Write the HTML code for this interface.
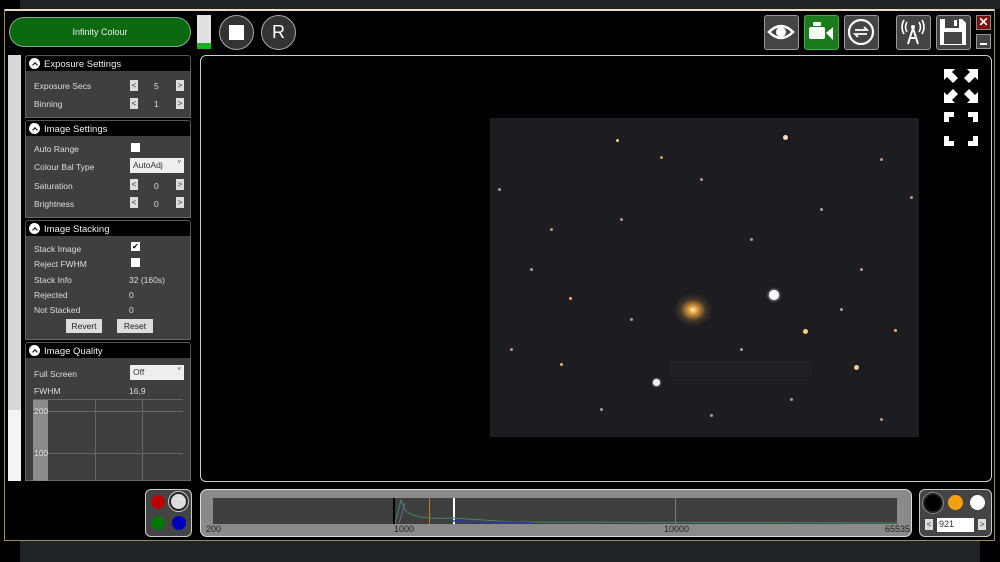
<!DOCTYPE html>
<html><head><style>
*{margin:0;padding:0;box-sizing:border-box}
body{width:1000px;height:562px;background:#000;position:relative;overflow:hidden;font-family:"Liberation Sans",sans-serif;color:#ddd;font-size:9px}
.a{position:absolute}
.hdr{position:absolute;left:25px;width:166px;height:16px;background:#000;border:1px solid #555;border-bottom:none;border-radius:3px 3px 0 0;font-size:9.5px;color:#eee;padding:3px 0 0 18px}
.hdr:before{content:"";position:absolute;left:3px;top:2px;width:11px;height:11px;border-radius:50%;background:#fff}
.hdr:after{content:"";position:absolute;left:7px;top:7px;width:3px;height:3px;border-left:1.5px solid #000;border-top:1.5px solid #000;transform:rotate(45deg)}
.body{position:absolute;left:25px;width:166px;background:#3f3f3f;border:1px solid #666;border-top:none}
.lbl{position:absolute;left:8px;font-size:8.5px;color:#ddd}
.val{position:absolute;font-size:8.5px;color:#ddd}
.btn{position:absolute;width:8px;height:11px;background:#ddd;color:#333;font-size:8px;text-align:center;line-height:11px}
.chk{position:absolute;width:9px;height:9px;background:#fff}
.tb{position:absolute;top:15px;width:35px;height:35px;border:1.5px solid #999;border-radius:3px;background:#444}
.s{position:absolute;width:3px;height:3px;border-radius:50%;background:#b98}
</style></head><body>
<div class="a" style="left:0;top:0;width:1000px;height:9px;background:#1e2428"></div>
<div class="a" style="left:0;top:0;width:20px;height:9px;background:#000"></div>
<div class="a" style="left:4px;top:9px;width:991px;height:2px;background:#e8dcc0"></div>
<div class="a" style="left:4px;top:9px;width:991px;height:532px;border:1px solid #a08a60;border-top:none"></div>
<div class="a" style="left:0;top:541px;width:1000px;height:21px;background:#1e2428"></div>
<div class="a" style="left:0;top:541px;width:20px;height:21px;background:#000"></div>
<div class="a" style="left:980px;top:541px;width:20px;height:21px;background:#000"></div>

<div class="a" style="left:9px;top:17px;width:182px;height:30px;border-radius:15px;background:#0b6a10;border:1px solid #8a9;color:#eee;font-size:9px;text-align:center;line-height:28px">Infinity Colour</div>
<div class="a" style="left:197px;top:15px;width:14px;height:34px;background:#e0e0e0"></div>
<div class="a" style="left:197px;top:43px;width:14px;height:6px;background:#19b21f"></div>
<div class="a" style="left:219px;top:15px;width:35px;height:35px;border-radius:50%;border:1.5px solid #aaa;background:#333"><div class="a" style="left:9px;top:9px;width:15px;height:15px;background:#fff"></div></div>
<div class="a" style="left:261px;top:15px;width:35px;height:35px;border-radius:50%;border:1.5px solid #aaa;background:#333;color:#fff;font-size:18px;text-align:center;line-height:32px">R</div>

<div class="tb" style="left:764px"><svg width="32" height="32" viewBox="0 0 32 32"><path d="M4 16Q16 4 28 16Q16 28 4 16Z" fill="none" stroke="#fff" stroke-width="2.5"/><circle cx="16" cy="16" r="5" fill="#fff"/></svg></div>
<div class="tb" style="left:804px;background:#1a7a1c;border-color:#4a4"><svg width="32" height="32" viewBox="0 0 32 32"><rect x="4" y="11" width="16" height="12" rx="2" fill="#fff"/><rect x="8" y="6" width="8" height="4" rx="1" fill="#fff"/><path d="M21 17L28 11V24Z" fill="#fff"/></svg></div>
<div class="tb" style="left:844px"><svg width="32" height="32" viewBox="0 0 32 32"><circle cx="16" cy="16" r="12" fill="none" stroke="#fff" stroke-width="2.2"/><path d="M10 14H22L19 11M22 18H10L13 21" fill="none" stroke="#fff" stroke-width="1.8"/></svg></div>
<div class="tb" style="left:896px"><svg width="32" height="32" viewBox="0 0 32 32"><circle cx="16" cy="11" r="2" fill="#fff"/><path d="M16 12L11 28M16 12L21 28M12 22H20" stroke="#fff" stroke-width="2" fill="none"/><path d="M10 6Q7 11 10 16M22 6Q25 11 22 16M7 4Q3 11 7 18M25 4Q29 11 25 18" stroke="#fff" stroke-width="1.6" fill="none"/></svg></div>
<div class="tb" style="left:936px"><svg width="32" height="32" viewBox="0 0 32 32"><path d="M3 3H25L29 7V29H3Z" fill="#fff"/><rect x="8" y="3" width="14" height="9" fill="#444"/><rect x="17" y="4" width="3" height="6" fill="#fff"/><rect x="7" y="16" width="18" height="12" fill="#444"/></svg></div>
<div class="a" style="left:976px;top:15px;width:15px;height:15px;background:#7a1010;border:1px solid #888;color:#fff;font-size:12px;font-weight:bold;text-align:center;line-height:13px">✕</div>
<div class="a" style="left:976px;top:34px;width:15px;height:15px;background:#444;border:1px solid #999"><div class="a" style="left:3px;top:8px;width:7px;height:2px;background:#fff"></div></div>

<div class="a" style="left:8px;top:55px;width:13px;height:426px;background:#d8d8d8"></div>
<div class="a" style="left:8px;top:410px;width:13px;height:71px;background:#f4f4f4"></div>

<div class="hdr" style="top:55px">Exposure Settings</div>
<div class="body" style="top:71px;height:47px">
<div class="lbl" style="top:10px">Exposure Secs</div><div class="btn" style="left:104px;top:9px">&lt;</div><div class="val" style="left:128px;top:10px">5</div><div class="btn" style="left:150px;top:9px">&gt;</div>
<div class="lbl" style="top:28px">Binning</div><div class="btn" style="left:104px;top:27px">&lt;</div><div class="val" style="left:128px;top:28px">1</div><div class="btn" style="left:150px;top:27px">&gt;</div>
</div>
<div class="hdr" style="top:120px">Image Settings</div>
<div class="body" style="top:136px;height:82px">
<div class="lbl" style="top:8px">Auto Range</div><div class="chk" style="left:105px;top:7px"></div>
<div class="lbl" style="top:26px">Colour Bal Type</div><div class="a" style="left:104px;top:22px;width:54px;height:15px;background:#eee;color:#333;font-size:8.5px;padding:2px 3px">AutoAdj <span style="float:right;font-size:6px">˅</span></div>
<div class="lbl" style="top:45px">Saturation</div><div class="btn" style="left:104px;top:43px">&lt;</div><div class="val" style="left:128px;top:45px">0</div><div class="btn" style="left:150px;top:43px">&gt;</div>
<div class="lbl" style="top:63px">Brightness</div><div class="btn" style="left:104px;top:61px">&lt;</div><div class="val" style="left:128px;top:63px">0</div><div class="btn" style="left:150px;top:61px">&gt;</div>
</div>
<div class="hdr" style="top:220px">Image Stacking</div>
<div class="body" style="top:236px;height:104px">
<div class="lbl" style="top:8px">Stack Image</div><div class="chk" style="left:105px;top:6px;color:#000;font-size:8px;line-height:9px;text-align:center">✔</div>
<div class="lbl" style="top:23px">Reject FWHM</div><div class="chk" style="left:105px;top:22px"></div>
<div class="lbl" style="top:39px">Stack Info</div><div class="val" style="left:103px;top:39px">32 (160s)</div>
<div class="lbl" style="top:54px">Rejected</div><div class="val" style="left:103px;top:54px">0</div>
<div class="lbl" style="top:69px">Not Stacked</div><div class="val" style="left:103px;top:69px">0</div>
<div class="a" style="left:40px;top:83px;width:36px;height:14px;background:#ddd;color:#222;font-size:8.5px;text-align:center;line-height:14px">Revert</div>
<div class="a" style="left:91px;top:83px;width:36px;height:14px;background:#ddd;color:#222;font-size:8.5px;text-align:center;line-height:14px">Reset</div>
</div>
<div class="hdr" style="top:342px">Image Quality</div>
<div class="body" style="top:358px;height:123px">
<div class="lbl" style="top:11px">Full Screen</div><div class="a" style="left:104px;top:7px;width:54px;height:15px;background:#eee;color:#333;font-size:8.5px;padding:2px 3px">Off <span style="float:right;font-size:6px">˅</span></div>
<div class="lbl" style="top:28px">FWHM</div><div class="val" style="left:103px;top:28px">16,9</div>
<div class="a" style="left:7px;top:42px;width:15px;height:81px;background:#8a8a8a"></div>
<div class="a" style="left:7px;top:41px;width:150px;height:1px;background:#666"></div>
<div class="a" style="left:7px;top:53px;width:150px;height:1px;background:#666"></div>
<div class="a" style="left:7px;top:95px;width:150px;height:1px;background:#666"></div>
<div class="a" style="left:69px;top:41px;width:1px;height:82px;background:#666"></div>
<div class="a" style="left:116px;top:41px;width:1px;height:82px;background:#666"></div>
<div class="val" style="left:8px;top:48px">200</div><div class="val" style="left:8px;top:90px">100</div>
</div>

<div class="a" style="left:200px;top:55px;width:792px;height:427px;border:1.5px solid #ccc;border-radius:6px;background:#000"></div>
<div class="a" style="left:490px;top:118px;width:429px;height:319px;background:#1c1c21;overflow:hidden">
<div class="a" style="left:183px;top:175px;width:40px;height:34px;border-radius:50%;background:radial-gradient(#fff4c0 0,#e0a040 15%,rgba(120,90,50,.4) 45%,transparent 70%)"></div>
<div class="a" style="left:279px;top:172px;width:10px;height:10px;border-radius:50%;background:#fff;box-shadow:0 0 3px #fff"></div>
<div class="a" style="left:163px;top:261px;width:7px;height:7px;border-radius:50%;background:#eef;box-shadow:0 0 2px #fff"></div>
<div class="a" style="left:180px;top:243px;width:142px;height:16px;background:#202026"></div>
<div class="a" style="left:293px;top:17px;width:5px;height:5px;border-radius:50%;background:#fdb"></div>
<div class="s" style="left:126px;top:21px;background:#fc7"></div>
<div class="s" style="left:364px;top:247px;width:5px;height:5px;background:#fc8"></div>
<div class="s" style="left:313px;top:211px;width:5px;height:5px;background:#fc8"></div>
<div class="s" style="left:79px;top:179px;background:#fa6"></div>
<div class="s" style="left:404px;top:211px;background:#fa6"></div>
<div class="s" style="left:170px;top:38px;background:#c95"></div>
<div class="s" style="left:70px;top:245px;background:#fa6"></div>
<div class="s" style="left:8px;top:70px"></div>
<div class="s" style="left:40px;top:150px"></div>
<div class="s" style="left:130px;top:100px"></div>
<div class="s" style="left:210px;top:60px"></div>
<div class="s" style="left:260px;top:120px"></div>
<div class="s" style="left:330px;top:90px"></div>
<div class="s" style="left:390px;top:40px"></div>
<div class="s" style="left:420px;top:78px"></div>
<div class="s" style="left:370px;top:150px"></div>
<div class="s" style="left:110px;top:290px"></div>
<div class="s" style="left:220px;top:296px"></div>
<div class="s" style="left:300px;top:280px"></div>
<div class="s" style="left:390px;top:300px"></div>
<div class="s" style="left:20px;top:230px"></div>
<div class="s" style="left:250px;top:230px"></div>
<div class="s" style="left:140px;top:200px"></div>
<div class="s" style="left:350px;top:190px"></div>
<div class="s" style="left:60px;top:110px"></div>
</div>
<svg class="a" style="left:943px;top:68px" width="36" height="80" viewBox="0 0 36 80"><g fill="#fff"><path d="M1 1H12L9 4L15 10L10 15L4 9L1 12Z"/><path d="M35 1V12L32 9L26 15L21 10L27 4L24 1Z"/><path d="M1 35V24L4 27L10 21L15 26L9 32L12 35Z"/><path d="M35 35H24L27 32L21 26L26 21L32 27L35 24Z"/><path d="M1 44H11V49H6V54H1Z"/><path d="M35 44H25V49H30V54H35Z"/><path d="M1 78H11V73H6V68H1Z"/><path d="M35 78H25V73H30V68H35Z"/></g></svg>

<div class="a" style="left:145px;top:489px;width:47px;height:48px;border:1.5px solid #ccc;border-radius:6px;background:#444">
<div class="a" style="left:5px;top:5px;width:14px;height:14px;border-radius:50%;background:#b00"></div>
<div class="a" style="left:23px;top:2px;width:19px;height:19px;border-radius:50%;background:#ddd;border:2px solid #222;box-shadow:0 0 0 1px #ccc"></div>
<div class="a" style="left:5px;top:26px;width:14px;height:14px;border-radius:50%;background:#070"></div>
<div class="a" style="left:26px;top:26px;width:14px;height:14px;border-radius:50%;background:#00b"></div>
</div>
<div class="a" style="left:200px;top:489px;width:712px;height:48px;border:1.5px solid #ddd;border-radius:7px;background:#8a8a8a">
<div class="a" style="left:12px;top:8px;width:684px;height:26px;background:#3f3f3f"></div>
<div class="a" style="left:192px;top:8px;width:2px;height:26px;background:#000"></div>
<div class="a" style="left:252px;top:8px;width:2px;height:26px;background:#fff"></div>
<div class="a" style="left:228px;top:8px;width:1px;height:26px;background:#c72"></div>
<div class="a" style="left:474px;top:8px;width:1px;height:26px;background:#777"></div>
<svg class="a" style="left:12px;top:8px" width="684" height="26"><path d="M182 25L188 2L192 12Q200 22 240 20L300 24L684 25" fill="none" stroke="#486" stroke-width="1"/><path d="M186 25L192 5" stroke="#669" stroke-width="1"/><path d="M240 23L320 25" stroke="#33a" stroke-width="1.5"/></svg>
<div class="a" style="left:5px;top:34px;font-size:9px;color:#222">200</div>
<div class="a" style="left:193px;top:34px;font-size:9px;color:#222">1000</div>
<div class="a" style="left:463px;top:34px;font-size:9px;color:#222">10000</div>
<div class="a" style="left:684px;top:34px;font-size:9px;color:#222">65535</div>
</div>
<div class="a" style="left:919px;top:489px;width:73px;height:48px;border:1.5px solid #ccc;border-radius:6px;background:#444">
<div class="a" style="left:3px;top:3px;width:20px;height:20px;border-radius:50%;background:#000;border:2px solid #222;box-shadow:0 0 0 1px #888"></div>
<div class="a" style="left:28px;top:5px;width:15px;height:15px;border-radius:50%;background:#f5a010"></div>
<div class="a" style="left:50px;top:5px;width:15px;height:15px;border-radius:50%;background:#fff"></div>
<div class="btn" style="left:5px;top:29px">&lt;</div>
<div class="a" style="left:17px;top:28px;width:37px;height:14px;background:#fff;color:#333;font-size:9px;padding:1px 2px">921</div>
<div class="btn" style="left:58px;top:29px">&gt;</div>
</div>
</body></html>
